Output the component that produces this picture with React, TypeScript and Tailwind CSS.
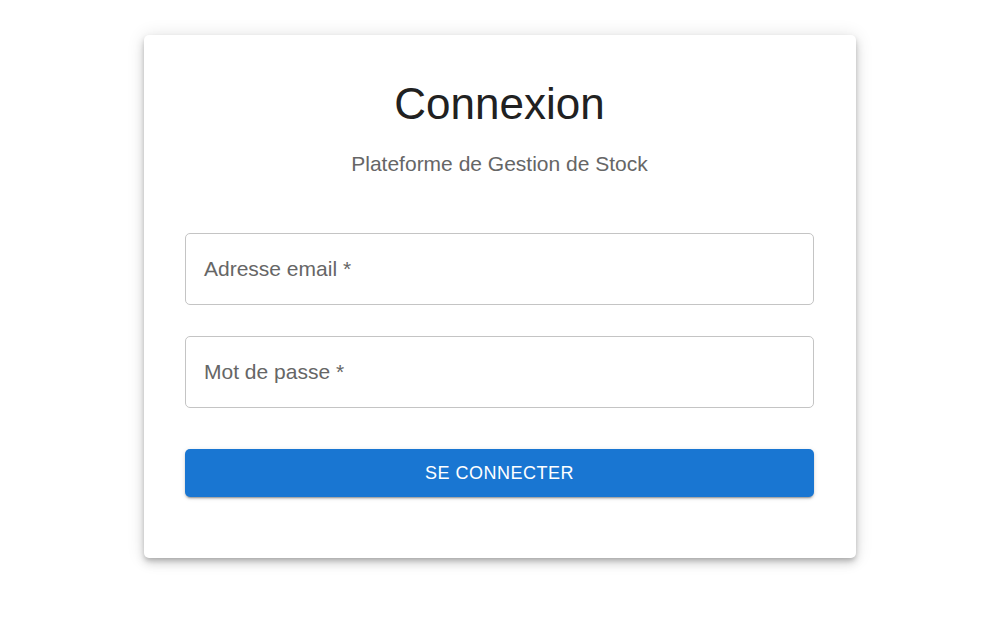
import { useState } from "react";

function Field({ label, type }: { label: string; type: string }) {
  const [value, setValue] = useState("");
  return (
    <div className="relative h-[72px] w-full rounded-[5px] border border-[#c4c4c4] bg-white">
      {!value && (
        <span className="pointer-events-none absolute left-[18px] top-1/2 -translate-y-1/2 text-[21px] text-[#666666]">
          {label}
        </span>
      )}
      <input
        type={type}
        value={value}
        onChange={(e) => setValue(e.target.value)}
        className="h-full w-full rounded-[5px] bg-transparent px-[18px] text-[21px] text-[#222] outline-none"
      />
    </div>
  );
}

export default function App() {
  return (
    <div
      className="min-h-[622px] w-full bg-white pt-[35px]"
      style={{ fontFamily: '"Liberation Sans", Arial, sans-serif' }}
    >
      <div className="mx-auto w-[712px] rounded-[5px] bg-white pb-[61px] pl-[41px] pr-[42px] pt-[43px] shadow-[0_3px_5px_-1px_rgba(0,0,0,0.2),0_5px_10px_0_rgba(0,0,0,0.14),0_1px_18px_0_rgba(0,0,0,0.12)]">
        <h1 className="text-center text-[44px] leading-[1.2] text-[#212121]">
          Connexion
        </h1>
        <p className="mt-[17px] text-center text-[21px] leading-[1.5] text-[#666666]">
          Plateforme de Gestion de Stock
        </p>

        <form className="mt-[54px] flex flex-col" onSubmit={(e) => e.preventDefault()}>
          <Field label="Adresse email *" type="email" />
          <div className="mt-[31px]">
            <Field label="Mot de passe *" type="password" />
          </div>
          <button
            type="submit"
            className="mt-[41px] h-[48px] w-full rounded-[5px] bg-[#1976d2] text-[18px] uppercase tracking-[0.5px] text-white shadow-[0_3px_1px_-2px_rgba(0,0,0,0.2),0_2px_2px_0_rgba(0,0,0,0.14),0_1px_5px_0_rgba(0,0,0,0.12)]"
          >
            Se connecter
          </button>
        </form>
      </div>
    </div>
  );
}
